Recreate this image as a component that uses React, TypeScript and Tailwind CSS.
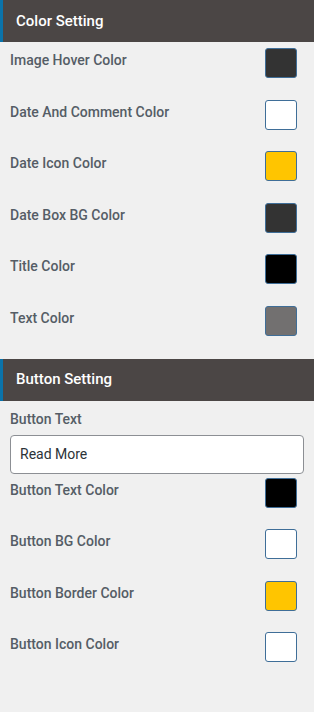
const colorRows = [
  { label: "Image Hover Color", color: "bg-[#333333]" },
  { label: "Date And Comment Color", color: "bg-white" },
  { label: "Date Icon Color", color: "bg-[#ffc500]" },
  { label: "Date Box BG Color", color: "bg-[#333333]" },
  { label: "Title Color", color: "bg-black" },
  { label: "Text Color", color: "bg-[#727070]" },
];

const buttonRows = [
  { label: "Button Text Color", color: "bg-black" },
  { label: "Button BG Color", color: "bg-white" },
  { label: "Button Border Color", color: "bg-[#ffc500]" },
  { label: "Button Icon Color", color: "bg-white" },
];

function SectionHeader({ title }: { title: string }) {
  return (
    <div className="h-[42px] flex items-center bg-[#4b4645] border-l-[3px] border-[#0a73aa] pl-[13px]">
      <span className="text-[15px] font-medium text-white">{title}</span>
    </div>
  );
}

function ColorRow({ label, color }: { label: string; color: string }) {
  return (
    <div className="h-[51.6px] flex items-start justify-between pl-[10px] pr-[17px]">
      <span className="mt-[8px] leading-5 text-[14px] font-medium text-[#555d66]">{label}</span>
      <div className={`mt-[6px] w-[32px] h-[30px] rounded-[3px] border border-[#3f6e98] ${color}`} />
    </div>
  );
}

export default function App() {
  return (
    <div
      className="w-[314px] h-[712px] bg-[#f0f0f0] overflow-hidden"
      style={{ fontFamily: "Roboto, 'Liberation Sans', sans-serif" }}
    >
      <SectionHeader title="Color Setting" />
      <div>
        {colorRows.map((r) => (
          <ColorRow key={r.label} {...r} />
        ))}
      </div>

      <div className="mt-[7px]">
        <SectionHeader title="Button Setting" />
      </div>
      <div className="px-[10px] pt-[8px]">
        <div className="leading-5 text-[14px] font-medium text-[#555d66]">Button Text</div>
        <div className="mt-[6px] h-[39px] flex items-center px-[9px] bg-white border border-[#8c8f94] rounded-[4px] text-[14px] text-[#2c3338]">
          Read More
        </div>
      </div>
      <div className="-mt-[2px]">
        {buttonRows.map((r) => (
          <ColorRow key={r.label} {...r} />
        ))}
      </div>
    </div>
  );
}
